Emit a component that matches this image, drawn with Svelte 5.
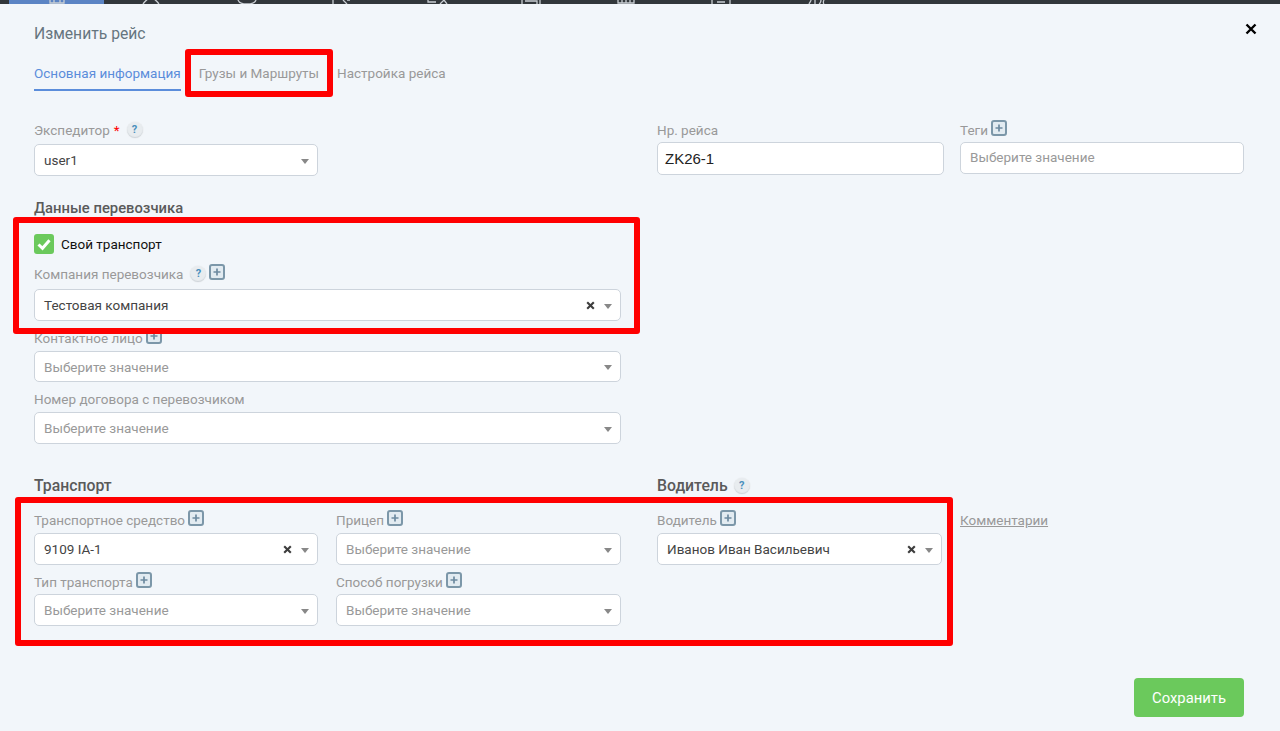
<script>
  const navItems = [
    { active: true, d: 'M4 0v3h14V0M8 0v3M14 0v3' },
    { d: 'M2 4C5 0 7-2 10-2s5 2 8 6' },
    { d: 'M2 0c1 3 4 4 9 4s8-1 9-4' },
    { d: 'M2 4V0M12 0l4 4M16 0h3' },
    { d: 'M2 0v2h8M14 4l4-4 3 4' },
    { d: 'M1 0v4M19 0v4M4 1h12v3' },
    { d: 'M2 0v3h16V0M6 0v3M10 0v3M14 0v3' },
    { d: 'M1 0v4M19 0v4M6 2h8' },
    { d: 'M3 4c1-2 2-3 2-4M9 4V0M13 4c2-1 2-3 2-4M18 0c-1 2-1 3 0 4' }
  ];
</script>

{#snippet help()}
  <span class="help">?</span>
{/snippet}

{#snippet plus()}
  <span class="plus" aria-hidden="true"><svg viewBox="0 0 16 16" width="16" height="16"><rect x="1" y="1" width="14" height="14" rx="2" fill="#e2ebf1" stroke="#7c97a9" stroke-width="2"/><path d="M8 4.5v7M4.5 8h7" stroke="#6d8aa0" stroke-width="1.7"/></svg></span>
{/snippet}

{#snippet select(value, clear, placeholder = !value)}
  <div class="select">
    <span class={placeholder ? 'ph' : 'val'}>{value || 'Выберите значение'}</span>
    {#if clear}
      <svg class="clear" viewBox="0 0 9 9" width="9" height="9"><path d="M1.2 1.2l6.6 6.6M7.8 1.2L1.2 7.8" stroke="#3d3d3d" stroke-width="2.1"/></svg>
    {/if}
    <span class="arrow"></span>
  </div>
{/snippet}

<header class="topbar">
  {#each navItems as item}
    <div class="navitem" class:active={item.active}>
      <svg viewBox="0 0 22 4" width="22" height="4"><path d={item.d} fill="none" stroke="#c9ced3" stroke-width="1.3"/></svg>
    </div>
  {/each}
</header>

<main class="modal">
  <button class="close" aria-label="Закрыть">
    <svg viewBox="0 0 12 12" width="12" height="12"><path d="M1.5 1.5l9 9M10.5 1.5l-9 9" stroke="#000" stroke-width="2.4"/></svg>
  </button>

  <h1>Изменить рейс</h1>

  <nav class="tabs">
    <span class="tab current">Основная информация</span>
    <span class="tab">Грузы и Маршруты</span>
    <span class="tab">Настройка рейса</span>
  </nav>

  <section class="top-row">
    <div class="half">
      <div class="label l5">Экспедитор <i class="req">*</i>{@render help()}</div>
      {@render select('user1', false)}
    </div>
    <div class="meta">
      <div>
        <div class="label l3">Нр. рейса</div>
        <div class="textinput">ZK26-1</div>
      </div>
      <div>
        <div class="label l3">Теги {@render plus()}</div>
        <div class="tagsinput">Выберите значение</div>
      </div>
    </div>
  </section>

  <h2 class="carrier-title">Данные перевозчика</h2>

  <section class="carrier">
    <label class="check">
      <span class="box"><svg viewBox="0 0 20 20" width="20" height="20"><path d="M4.5 10.5l4 3.8 7-8" fill="none" stroke="#fff" stroke-width="3"/></svg></span>
      Свой транспорт
    </label>
    <div class="field company">
      <div class="label l6">Компания перевозчика {@render help()}{@render plus()}</div>
      {@render select('Тестовая компания', true)}
    </div>
    <div class="field contact">
      <div class="label">Контактное лицо {@render plus()}</div>
      <div class="short">{@render select('', false)}</div>
    </div>
    <div class="field contract">
      <div class="label">Номер договора с перевозчиком</div>
      {@render select('', false)}
    </div>
  </section>

  <section class="lower">
    <div>
      <h2>Транспорт</h2>
      <div class="transport-grid">
        <div>
          <div class="label">Транспортное средство {@render plus()}</div>
          {@render select('9109 IA-1', true)}
        </div>
        <div>
          <div class="label">Прицеп {@render plus()}</div>
          {@render select('', false)}
        </div>
        <div>
          <div class="label l3">Тип транспорта {@render plus()}</div>
          {@render select('', false)}
        </div>
        <div>
          <div class="label l3">Способ погрузки {@render plus()}</div>
          {@render select('', false)}
        </div>
      </div>
    </div>
    <div class="driver-col">
      <div class="driver">
        <h2>Водитель {@render help()}</h2>
        <div class="label">Водитель {@render plus()}</div>
        {@render select('Иванов Иван Васильевич', true)}
      </div>
      <div class="comment"><span>Комментарии</span></div>
    </div>
  </section>

  <footer class="actions">
    <button class="save">Сохранить</button>
  </footer>

  <div class="mark m1"></div>
  <div class="mark m2"></div>
  <div class="mark m3"></div>
</main>

<style>
  :global(body) {
    margin: 0;
    background: #f2f6fa;
    font-family: Roboto, "Liberation Sans", sans-serif;
    font-size: 13.5px;
    color: #444;
    overflow: hidden;
  }
  .topbar {
    height: 4px;
    background: #32373b;
    display: flex;
    padding-left: 9px;
    overflow: hidden;
  }
  .navitem {
    width: 95px;
    flex: none;
    display: flex;
    justify-content: center;
  }
  .navitem.active { background: #5b84c4; }
  .navitem svg { display: block; }
  .modal {
    position: relative;
    height: 727px;
    box-sizing: border-box;
    background: #f2f6fa;
    border-radius: 10px 10px 0 0;
    padding: 20px 36px 0 34px;
  }
  .close {
    position: absolute;
    top: 19px;
    right: 23px;
    width: 12px;
    height: 12px;
    padding: 0;
    border: 0;
    background: none;
    line-height: 0;
  }
  h1 {
    margin: 0;
    font-size: 15.7px;
    line-height: 20px;
    font-weight: 400;
    color: #66757f;
  }
  .tabs {
    display: flex;
    gap: 18px;
    height: 37px;
    margin-top: 11px;
  }
  .tab {
    color: #999;
    font-size: 13.5px;
    line-height: 18px;
    padding-top: 9px;
    height: 36px;
    box-sizing: border-box;
  }
  .tab.current {
    color: #5b8ddb;
    border-bottom: 2px solid #5b8ddb;
  }
  .label {
    display: flex;
    align-items: center;
    gap: 3px;
    height: 18px;
    line-height: 18px;
    margin-bottom: 4px;
    color: #999;
    font-size: 13.5px;
    white-space: nowrap;
  }
  .l3 { margin-bottom: 3px; }
  .l5 { margin-bottom: 5px; }
  .l6 { margin-bottom: 6px; }
  .req { color: #f00; font-style: normal; margin-left: 1px; }
  .help {
    width: 16px;
    height: 16px;
    margin-left: 4px;
    border-radius: 50%;
    background: #e8ecef;
    box-shadow: inset 0 -1px 1px #cfd5da, 0 0 0 1px #eef1f4;
    color: #4a90bd;
    font-size: 11px;
    font-weight: 700;
    line-height: 16px;
    text-align: center;
    flex: none;
  }
  .plus {
    width: 16px;
    height: 16px;
    flex: none;
    transform: translateY(-2px);
  }
  .plus svg { display: block; }
  .select {
    height: 32px;
    box-sizing: border-box;
    display: flex;
    align-items: center;
    background: #fff;
    border: 1px solid #cdd4dc;
    border-radius: 5px;
    padding: 0 8px 0 9px;
    font-size: 13.5px;
  }
  .select > span:first-child { flex: 1; white-space: nowrap; }
  .val { color: #444; }
  .ph { color: #999; }
  .clear { margin-right: 9px; }
  .arrow {
    width: 0;
    height: 0;
    margin-top: 2px;
    border-left: 4.5px solid transparent;
    border-right: 4.5px solid transparent;
    border-top: 5px solid #888;
  }
  .top-row {
    display: grid;
    grid-template-columns: 587px 587px;
    column-gap: 36px;
    margin-top: 29px;
  }
  .half { width: 284px; }
  .meta {
    display: grid;
    grid-template-columns: 287px 284px;
    column-gap: 16px;
  }
  .textinput {
    height: 33px;
    box-sizing: border-box;
    background: #fff;
    border: 1px solid #cdd4dc;
    border-radius: 5px;
    padding-left: 7px;
    font: 15px/31px "Liberation Sans", Arial, sans-serif;
    color: #222;
  }
  .tagsinput {
    height: 32px;
    box-sizing: border-box;
    background: #fff;
    border: 1px solid #cdd4dc;
    border-radius: 5px;
    padding-left: 9px;
    line-height: 29px;
    color: #999;
  }
  h2 {
    margin: 0;
    font-size: 14.8px;
    line-height: 18px;
    font-weight: 500;
    color: #5a5a5a;
    display: flex;
    align-items: center;
    gap: 2px;
  }
  .carrier-title { margin-top: 23px; }
  .carrier { width: 587px; margin-top: 17px; }
  .check {
    display: flex;
    align-items: center;
    gap: 7px;
    height: 20px;
    font-size: 13.5px;
    color: #111;
  }
  .box {
    width: 20px;
    height: 20px;
    background: #6bc95c;
    border-radius: 3px;
    line-height: 0;
  }
  .company { margin-top: 11px; }
  .contact { margin-top: 8px; }
  .short .select { height: 31px; }
  .contract { margin-top: 8px; }
  .lower {
    display: grid;
    grid-template-columns: 587px 587px;
    column-gap: 36px;
    margin-top: 33px;
  }
  .lower h2 { font-size: 15.8px; margin-bottom: 16px; height: 18px; }
  .transport-grid {
    display: grid;
    grid-template-columns: 284px 285px;
    column-gap: 18px;
    row-gap: 8px;
  }
  .driver-col {
    display: grid;
    grid-template-columns: 285px 284px;
    column-gap: 18px;
  }
  .comment {
    padding-top: 34px;
    color: #999;
    line-height: 18px;
  }
  .comment span { text-decoration: underline; }
  .actions {
    position: absolute;
    right: 36px;
    top: 674px;
  }
  .save {
    display: block;
    width: 110px;
    height: 39px;
    border: 0;
    border-radius: 4px;
    background: #6bc95c;
    color: #fff;
    font: 400 14.8px Roboto, sans-serif;
  }
  .mark {
    position: absolute;
    box-sizing: border-box;
    border: 6px solid #f00;
    border-radius: 3px;
    pointer-events: none;
  }
  .m1 { left: 185px; top: 45px; width: 148px; height: 48px; }
  .m2 { left: 13px; top: 213px; width: 627px; height: 117px; }
  .m3 { left: 15px; top: 493px; width: 938px; height: 149px; }
</style>
